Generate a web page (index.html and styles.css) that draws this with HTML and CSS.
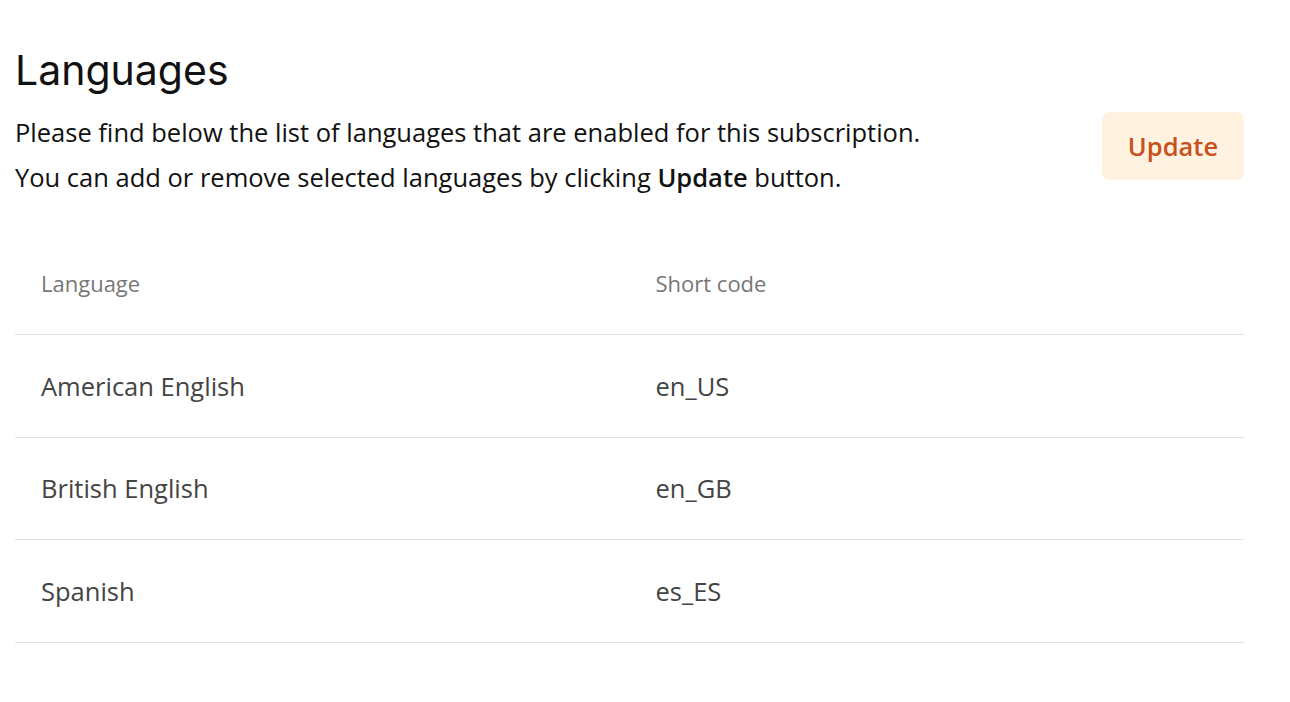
FILE: index.html
```html
<!DOCTYPE html>
<html lang="en">
<head>
    <meta charset="UTF-8">
    <meta name="viewport" content="width=device-width, initial-scale=1.0">
    <title>Languages</title>
    <link rel="stylesheet" href="styles.css">
</head>
<body>
    <div class="page">
        <h1 class="page-title">Languages</h1>

        <div class="intro">
            <div class="intro-text">
                <p>Please find below the list of languages that are enabled for this subscription.</p>
                <p>You can add or remove selected languages by clicking <strong>Update</strong> button.</p>
            </div>
            <button class="update-button">Update</button>
        </div>

        <!-- Enabled languages -->
        <table class="lang-table">
            <thead>
                <tr>
                    <th>Language</th>
                    <th>Short code</th>
                </tr>
            </thead>
            <tbody>
                <tr>
                    <td>American English</td>
                    <td>en_US</td>
                </tr>
                <tr>
                    <td>British English</td>
                    <td>en_GB</td>
                </tr>
                <tr>
                    <td>Spanish</td>
                    <td>es_ES</td>
                </tr>
            </tbody>
        </table>
    </div>
</body>
</html>
```

FILE: styles.css
```css
:root {
    --text-color: #111111;
    --muted-color: #777777;
    --cell-color: #444444;
    --line-color: #e2e2e2;
    --accent-color: #c9501c;
    --accent-bg: #fff2e1;
}

body {
    margin: 0;
    padding: 0;
    font-family: 'Open Sans', 'Noto Sans', sans-serif;
    color: var(--text-color);
    background: #ffffff;
}

.page {
    width: 1229px;
    padding: 42px 0 0 15px;
}

.page-title {
    margin: 0;
    font-family: 'Inter', 'DejaVu Sans', sans-serif;
    font-weight: 400;
    font-size: 41px;
    line-height: 56px;
}

.intro {
    display: flex;
    justify-content: space-between;
    align-items: flex-start;
    margin-top: 12px;
}

.intro-text p {
    margin: 0;
    font-size: 25.5px;
    line-height: 45px;
}

.intro-text strong {
    font-weight: 600;
}

.update-button {
    margin-top: 2px;
    width: 142px;
    height: 68px;
    border: none;
    border-radius: 8px;
    background-color: var(--accent-bg);
    color: var(--accent-color);
    font-family: 'Open Sans', sans-serif;
    font-weight: 600;
    font-size: 25.5px;
    cursor: pointer;
}

.lang-table {
    width: 100%;
    margin-top: 32px;
    border-collapse: collapse;
    table-layout: fixed;
}

.lang-table th,
.lang-table td {
    height: 102.5px;
    padding: 0 26px;
    text-align: left;
    border-bottom: 1px solid var(--line-color);
    box-sizing: border-box;
}

.lang-table th {
    font-weight: 400;
    font-size: 22px;
    color: var(--muted-color);
}

.lang-table td {
    font-size: 25.5px;
    color: var(--cell-color);
}
```
